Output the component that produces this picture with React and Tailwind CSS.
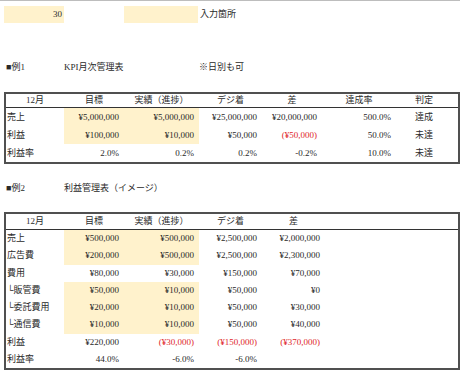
import React from 'react';

const hl = 'bg-[#fff2cc]';

// table 1: KPI
const kpiCols = 'grid-cols-[58px_60px_75px_63px_60px_74px_56px]';
const kpiHead = ['12月', '目標', '実績（進捗）', 'デジ着', '差', '達成率', '判定'];
const kpiRows = [
  { label: '売上', cells: ['¥5,000,000', '¥5,000,000', '¥25,000,000', '¥20,000,000', '500.0%'], judge: '達成', hl: true },
  { label: '利益', cells: ['¥100,000', '¥10,000', '¥50,000', '(¥50,000)', '50.0%'], judge: '未達', hl: true, red: [3] },
  { label: '利益率', cells: ['2.0%', '0.2%', '0.2%', '-0.2%', '10.0%'], judge: '未達' },
];

// table 2: profit
const plCols = 'grid-cols-[58px_60px_75px_63px_63px]';
const plHead = ['12月', '目標', '実績（進捗）', 'デジ着', '差'];
const plRows = [
  { label: '売上', cells: ['¥500,000', '¥500,000', '¥2,500,000', '¥2,000,000'], hl: true },
  { label: '広告費', cells: ['¥200,000', '¥500,000', '¥2,500,000', '¥2,300,000'], hl: true },
  { label: '費用', cells: ['¥80,000', '¥30,000', '¥150,000', '¥70,000'] },
  { label: '└販管費', cells: ['¥50,000', '¥10,000', '¥50,000', '¥0'], hl: true },
  { label: '└委託費用', cells: ['¥20,000', '¥10,000', '¥50,000', '¥30,000'], hl: true },
  { label: '└通信費', cells: ['¥10,000', '¥10,000', '¥50,000', '¥40,000'], hl: true },
  { label: '利益', cells: ['¥220,000', '(¥30,000)', '(¥150,000)', '(¥370,000)'], red: [1, 2, 3] },
  { label: '利益率', cells: ['44.0%', '-6.0%', '-6.0%', ''] },
];

const Table = ({ cols, head, rows, headH, rowH, judge }) => (
  <div className="ml-[4px] self-start border-2 border-[#505050]">
    <div className={`grid ${cols} ${headH} items-center border-b border-[#333]`}>
      {head.map((h) => (
        <div key={h} className="text-center">{h}</div>
      ))}
    </div>
    {rows.map((r) => (
      <div key={r.label} className={`grid ${cols} ${rowH}`}>
        <div className="flex items-center pl-[1px]">{r.label}</div>
        {r.cells.map((c, i) => (
          <div
            key={i}
            className={`flex items-center justify-end pr-[5px] ${r.hl && i < 2 ? hl : ''} ${r.red && r.red.includes(i) ? 'text-[#e0262b]' : ''}`}
          >
            {c}
          </div>
        ))}
        {judge && <div className="flex items-center justify-center">{r.judge}</div>}
      </div>
    ))}
  </div>
);

export default function App() {
  return (
    <div className="w-[460px] h-[380px] overflow-hidden bg-white border-t border-[#bdbdbd] flex flex-col text-[9px] leading-none text-[#2a2a2a] font-['Liberation_Serif','Noto_Sans_CJK_JP',serif]">
      {/* input legend */}
      <div className="mt-[5px] ml-[4px] flex h-[17px]">
        <div className={`w-[60px] ${hl} flex items-center justify-end pr-[2px]`}>30</div>
        <div className="w-[60px]" />
        <div className={`w-[74px] ${hl}`} />
        <div className="flex items-center pl-[2px]">入力箇所</div>
      </div>

      {/* example 1 */}
      <div className="mt-[35px] ml-[4px] flex h-[18px] items-center">
        <div className="w-[60px] pl-[2px]">■例1</div>
        <div className="w-[135px]">KPI月次管理表</div>
        <div>※日別も可</div>
      </div>
      <div className="mt-[16px]">
        <Table cols={kpiCols} head={kpiHead} rows={kpiRows} headH="h-[14px]" rowH="h-[18px]" judge />
      </div>

      {/* example 2 */}
      <div className="mt-[15px] ml-[4px] flex h-[18px] items-center">
        <div className="w-[60px] pl-[2px]">■例2</div>
        <div>利益管理表（イメージ）</div>
      </div>
      <div className="mt-[15px]">
        <Table cols={plCols} head={plHead} rows={plRows} headH="h-[16px]" rowH="h-[17.25px]" />
      </div>
    </div>
  );
}
